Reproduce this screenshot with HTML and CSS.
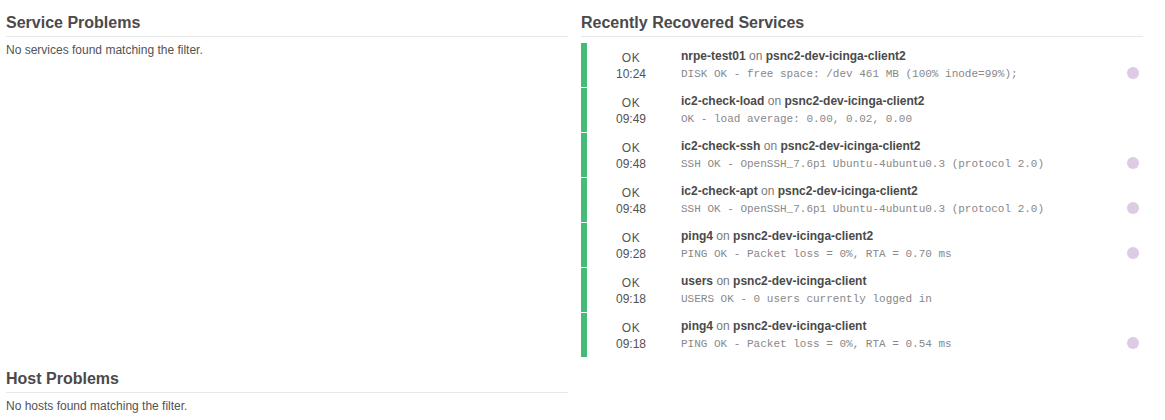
FILE: index.html
```html
<!DOCTYPE html>
<html>
<head>
<meta charset="utf-8">
<link rel="stylesheet" href="styles.css">
</head>
<body>
<div class="dashboard">
  <section class="dashlet">
    <h2 class="dashlet-title">Service Problems</h2>
    <p class="empty">No services found matching the filter.</p>
  </section>
  <section class="dashlet">
    <h2 class="dashlet-title">Recently Recovered Services</h2>
    <div class="list">
      <div class="row">
        <div class="state"><div class="state-name">OK</div><div class="state-time">10:24</div></div>
        <div class="main">
          <div class="title"><b>nrpe-test01</b> <span class="on">on</span> <b>psnc2-dev-icinga-client2</b></div>
          <div class="output">DISK OK - free space: /dev 461 MB (100% inode=99%);</div>
        </div>
        <div class="dot"></div>
      </div>
      <div class="row">
        <div class="state"><div class="state-name">OK</div><div class="state-time">09:49</div></div>
        <div class="main">
          <div class="title"><b>ic2-check-load</b> <span class="on">on</span> <b>psnc2-dev-icinga-client2</b></div>
          <div class="output">OK - load average: 0.00, 0.02, 0.00</div>
        </div>
        <div class="dot dot-none"></div>
      </div>
      <div class="row">
        <div class="state"><div class="state-name">OK</div><div class="state-time">09:48</div></div>
        <div class="main">
          <div class="title"><b>ic2-check-ssh</b> <span class="on">on</span> <b>psnc2-dev-icinga-client2</b></div>
          <div class="output">SSH OK - OpenSSH_7.6p1 Ubuntu-4ubuntu0.3 (protocol 2.0)</div>
        </div>
        <div class="dot"></div>
      </div>
      <div class="row">
        <div class="state"><div class="state-name">OK</div><div class="state-time">09:48</div></div>
        <div class="main">
          <div class="title"><b>ic2-check-apt</b> <span class="on">on</span> <b>psnc2-dev-icinga-client2</b></div>
          <div class="output">SSH OK - OpenSSH_7.6p1 Ubuntu-4ubuntu0.3 (protocol 2.0)</div>
        </div>
        <div class="dot"></div>
      </div>
      <div class="row">
        <div class="state"><div class="state-name">OK</div><div class="state-time">09:28</div></div>
        <div class="main">
          <div class="title"><b>ping4</b> <span class="on">on</span> <b>psnc2-dev-icinga-client2</b></div>
          <div class="output">PING OK - Packet loss = 0%, RTA = 0.70 ms</div>
        </div>
        <div class="dot"></div>
      </div>
      <div class="row">
        <div class="state"><div class="state-name">OK</div><div class="state-time">09:18</div></div>
        <div class="main">
          <div class="title"><b>users</b> <span class="on">on</span> <b>psnc2-dev-icinga-client</b></div>
          <div class="output">USERS OK - 0 users currently logged in</div>
        </div>
        <div class="dot dot-none"></div>
      </div>
      <div class="row">
        <div class="state"><div class="state-name">OK</div><div class="state-time">09:18</div></div>
        <div class="main">
          <div class="title"><b>ping4</b> <span class="on">on</span> <b>psnc2-dev-icinga-client</b></div>
          <div class="output">PING OK - Packet loss = 0%, RTA = 0.54 ms</div>
        </div>
        <div class="dot"></div>
      </div>
    </div>
  </section>
  <section class="dashlet dashlet-second">
    <h2 class="dashlet-title">Host Problems</h2>
    <p class="empty">No hosts found matching the filter.</p>
  </section>
</div>
</body>
</html>
```
FILE: styles.css
```css
html, body {
  margin: 0;
  padding: 0;
  background: #fff;
}
body {
  font-family: "Liberation Sans", Arial, sans-serif;
  color: #535353;
  font-size: 12px;
}
.dashboard {
  display: grid;
  grid-template-columns: 562px 562px;
  column-gap: 13px;
  padding: 0 22px 0 6px;
}
.dashlet {
  padding-top: 13px;
}
.dashlet-second {
  padding-top: 12px;
}
.dashlet-title {
  margin: 0;
  font-size: 16px;
  line-height: 20px;
  font-weight: bold;
  color: #4a4a4a;
  padding-bottom: 3px;
  border-bottom: 1px solid #e8e8e8;
}
.empty {
  margin: 6px 0 0 0;
  font-size: 12px;
  line-height: 15px;
  color: #535353;
}
.list {
  margin-top: 6px;
  display: flex;
  flex-direction: column;
  gap: 1px;
}
.row {
  display: flex;
  height: 44px;
  box-sizing: border-box;
  border-left: 6px solid #44bb77;
  padding: 6px 0;
}
.state {
  width: 88px;
  text-align: center;
  line-height: 16px;
  color: #535353;
  padding-top: 1px;
}
.state-name {
  letter-spacing: 0.5px;
}
.main {
  flex: 1;
  padding-left: 6px;
  line-height: 16px;
  min-width: 0;
}
.title {
  color: #535353;
  line-height: 15px;
  margin-bottom: 2px;
}
.title b {
  font-weight: bold;
  color: #4a4a4a;
}
.on {
  color: #7a7a7a;
}
.output {
  font-family: "Liberation Mono", "Courier New", monospace;
  font-size: 11px;
  color: #888;
  white-space: nowrap;
}
.dot {
  width: 12px;
  height: 12px;
  border-radius: 50%;
  background: #dccbe3;
  margin: 18px 4px 0 0;
  flex: none;
}
.dot-none {
  visibility: hidden;
}
```
